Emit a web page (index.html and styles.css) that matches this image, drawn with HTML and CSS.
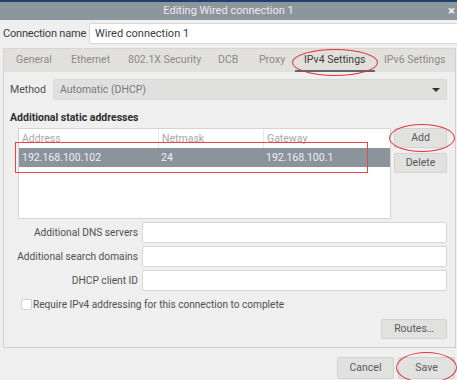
FILE: index.html
```html
<!DOCTYPE html>
<html>
<head>
<meta charset="utf-8">
<link rel="stylesheet" href="styles.css">
</head>
<body>
<div class="topstrip"></div>
<div class="titlebar">Editing Wired connection 1<span class="close">×</span></div>
<div class="conn-row">
  <span class="conn-label">Connection name</span>
  <div class="conn-input">Wired connection 1</div>
</div>
<div class="notebook">
  <div class="tabbar">
    <span class="tab">General</span>
    <span class="tab">Ethernet</span>
    <span class="tab">802.1X Security</span>
    <span class="tab">DCB</span>
    <span class="tab">Proxy</span>
    <span class="tab active">IPv4 Settings</span>
    <span class="tab">IPv6 Settings</span>
    <div class="ellipse tab-ellipse"></div>
  </div>
  <div class="panel">
    <div class="method-row">
      <span class="method-label">Method</span>
      <div class="combo">Automatic (DHCP)<span class="arrow"></span></div>
    </div>
    <div class="section-title">Additional static addresses</div>
    <div class="addr-row">
      <div class="list">
        <div class="list-head">
          <span class="col c1">Address</span>
          <span class="col c2">Netmask</span>
          <span class="col c3">Gateway</span>
        </div>
        <div class="list-sel">
          <span class="col c1">192.168.100.102</span>
          <span class="col c2">24</span>
          <span class="col c3">192.168.100.1</span>
        </div>
        <div class="redbox"></div>
      </div>
      <div class="side-buttons">
        <div class="btn">Add</div>
        <div class="btn">Delete</div>
        <div class="ellipse add-ellipse"></div>
      </div>
    </div>
    <div class="form">
      <span class="flabel">Additional DNS servers</span><div class="finput"></div>
      <span class="flabel">Additional search domains</span><div class="finput"></div>
      <span class="flabel">DHCP client ID</span><div class="finput"></div>
    </div>
    <div class="check-row"><span class="checkbox"></span>Require IPv4 addressing for this connection to complete</div>
    <div class="routes-row"><div class="btn routes">Routes…</div></div>
  </div>
</div>
<div class="footer">
  <div class="btn fbtn">Cancel</div>
  <div class="btn fbtn save">Save<div class="ellipse save-ellipse"></div></div>
</div>
</body>
</html>
```
FILE: styles.css
```css
* { box-sizing: border-box; }
html, body { margin: 0; padding: 0; }
body {
  width: 457px;
  height: 380px;
  overflow: hidden;
  background: #efefef;
  font-family: Roboto, "Liberation Sans", sans-serif;
  font-size: 10.5px;
  color: #505050;
  white-space: nowrap;
}
.topstrip { height: 2px; background: #1d4070; }
.titlebar {
  position: relative;
  height: 18px;
  background: #8d969d;
  color: #e9ebec;
  text-align: center;
  line-height: 18px;
  font-size: 11px;
}
.close {
  position: absolute;
  right: 2px;
  top: 0;
  font-size: 13px;
  font-weight: bold;
  color: #f4f4f4;
}
.conn-row {
  display: flex;
  align-items: center;
  padding: 3px 0 0 3px;
  height: 24px;
}
.conn-label { width: 86px; flex-shrink: 0; color: #3c3c3c; font-size: 11px; letter-spacing: -0.2px; }
.conn-input {
  flex: 1;
  height: 21px;
  background: #fff;
  border: 1px solid #d6d6d6;
  border-right: none;
  border-radius: 2px 0 0 2px;
  padding-left: 5px;
  line-height: 19px;
  color: #3c3c3c;
  font-size: 11px;
}
.notebook {
  margin: 4px 1px 0 3px;
  border: 1px solid #cfcfcf;
  border-top: none;
}
.tabbar {
  position: relative;
  display: flex;
  height: 24px;
  background: #e2e0dd;
  border-top: 1px solid #d8d6d3;
}
.tab {
  position: absolute;
  top: 0;
  padding: 0 9px;
  line-height: 21px;
  color: #8a8a8a;
}
.tab:nth-child(1) { left: 3px; }
.tab:nth-child(2) { left: 58px; }
.tab:nth-child(3) { left: 115px; }
.tab:nth-child(4) { left: 205px; }
.tab:nth-child(5) { left: 246px; }
.tab:nth-child(6) { left: 291px; }
.tab:nth-child(7) { left: 371px; }
.tab.active { color: #3c3c3c; border-bottom: 2px solid #5c6770; }
.ellipse {
  position: absolute;
  border: 1px solid #e2363a;
  border-radius: 50%;
  pointer-events: none;
}
.tab-ellipse { left: 288px; top: 0px; width: 86px; height: 27px; }
.panel { padding: 7px 8px 8px 6px; }
.method-row { display: flex; align-items: center; height: 21px; }
.method-label { width: 43px; flex-shrink: 0; }
.combo {
  position: relative;
  flex: 1;
  height: 21px;
  background: #e0e0df;
  border: 1px solid #d8d8d8;
  border-radius: 2px;
  padding-left: 6px;
  line-height: 19px;
  color: #7a7a7a;
}
.arrow {
  position: absolute;
  right: 6px;
  top: 8px;
  border-left: 4px solid transparent;
  border-right: 4px solid transparent;
  border-top: 4px solid #333;
}
.section-title {
  margin-top: 10px;
  font-weight: bold;
  color: #2e2e2e;
  height: 16px;
  line-height: 16px;
}
.addr-row { display: flex; margin-top: 2px; padding-left: 8px; }
.list {
  position: relative;
  width: 373px;
  height: 91px;
  background: #fff;
  border: 1px solid #d4d4d4;
  flex-shrink: 0;
}
.list-head, .list-sel { display: flex; height: 19px; line-height: 19px; }
.list-head .col { color: #a8a8a8; border-left: 1px solid #e6e6e6; }
.list-head .c1 { border-left: none; }
.list-sel { background: #8b949b; }
.list-sel .col { color: #eef0f1; }
.col { padding-left: 3px; }
.c1 { width: 139px; }
.c2 { width: 105px; }
.c3 { flex: 1; }
.redbox {
  position: absolute;
  left: -4px;
  top: 13px;
  width: 353px;
  height: 31px;
  border: 1px solid #e8474a;
}
.side-buttons {
  position: relative;
  display: flex;
  flex-direction: column;
  gap: 5px;
  margin-left: 3px;
  width: 55px;
}
.btn {
  height: 20px;
  background: #e1e1e0;
  border: 1px solid #d2d2d2;
  border-radius: 2px;
  text-align: center;
  line-height: 18px;
  color: #5a5a5a;
}
.add-ellipse { left: -5px; top: -4px; width: 66px; height: 28px; }
.form {
  display: grid;
  grid-template-columns: 128px 1fr;
  column-gap: 4px;
  row-gap: 3px;
  margin-top: 3px;
}
.flabel { text-align: right; line-height: 21px; font-size: 10.2px; }
.finput {
  height: 21px;
  background: #fff;
  border: 1px solid #d6d6d6;
  border-radius: 2px;
}
.check-row {
  display: flex;
  align-items: center;
  margin-top: 6px;
  padding-left: 11px;
  height: 14px;
  font-size: 10.1px;
}
.checkbox {
  width: 11px;
  height: 11px;
  background: #fff;
  border: 1px solid #d0d0d0;
  border-radius: 2px;
  margin-right: 1px;
}
.routes-row { display: flex; justify-content: flex-end; margin-top: 8px; }
.routes { width: 66px; }
.footer {
  display: flex;
  justify-content: flex-end;
  gap: 4px;
  padding: 9px 2px 0 0;
}
.fbtn { width: 57px; height: 22px; line-height: 20px; position: relative; }
.save-ellipse { left: -3px; top: -6px; width: 61px; height: 31px; }
```
